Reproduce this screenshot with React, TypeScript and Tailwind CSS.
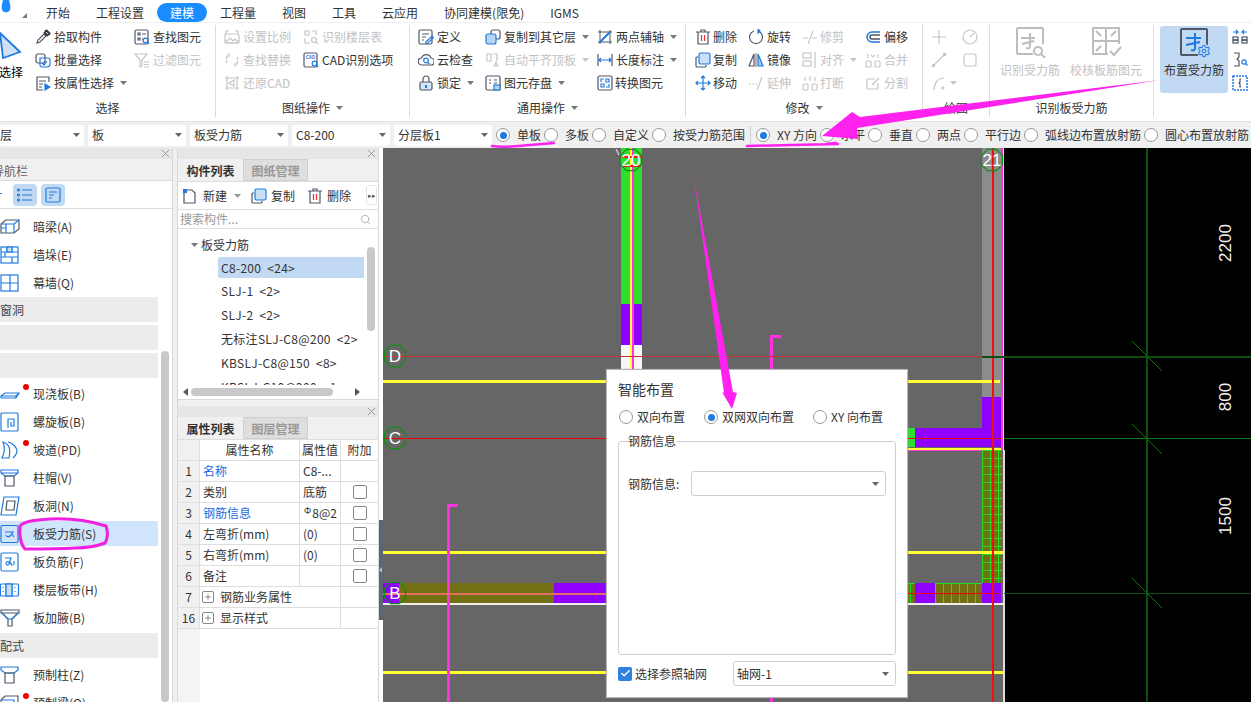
import type { ReactNode } from 'react';
import { Settings, Search, Plus, Check } from 'lucide-react';

const D = '#4f5666';
const B = '#1f7ae0';
const G = '#c6c6c6';

function Ic({ children, s = 16, c = D, vb = '0 0 16 16' }: { children: ReactNode; s?: number; c?: string; vb?: string }) {
  return (
    <svg width={s} height={s} viewBox={vb} fill="none" stroke={c} strokeWidth={1.2} className="shrink-0">
      {children}
    </svg>
  );
}

function Caret({ c = '#777' }: { c?: string }) {
  return (
    <svg width="7" height="4" viewBox="0 0 7 4" className="shrink-0">
      <path d="M0 0h7L3.5 4z" fill={c} />
    </svg>
  );
}

function Item({ icon, label, off, caret, gap }: { icon: ReactNode; label: string; off?: boolean; caret?: boolean; gap?: boolean }) {
  return (
    <div className={`flex items-center h-[23px] whitespace-nowrap ${off ? 'text-[#c2c2c2]' : 'text-[#333]'}`}>
      {icon}
      <span className={gap ? 'ml-[2px]' : 'ml-[3px]'}>{label}</span>
      {caret && <span className="ml-[6px]"><Caret c={off ? G : '#777'} /></span>}
    </div>
  );
}

function Group({ w, label, caret, children, last }: { w: string; label?: string; caret?: boolean; children: ReactNode; last?: boolean }) {
  return (
    <div className={`${w} mt-[2px] shrink-0 flex flex-col ${last ? '' : 'border-r border-[#dcdcdc]'}`}>
      <div className="flex flex-1 overflow-hidden">{children}</div>
      <div className="h-[18px] flex items-center justify-center gap-[6px] text-[#333] leading-none">
        {label}
        {caret && <Caret />}
      </div>
    </div>
  );
}

const ic = {
  pick: <Ic><path d="M2 14l1-3 6-6 2 2-6 6z" /><path d="M9 3l4 4M10 2.5l1.5-1 3 3-1 1.5" strokeWidth={2} stroke="#333" /></Ic>,
  batch: <Ic><rect x="1" y="2" width="9" height="9" rx="2" /><path d="M5 6h8a2 2 0 0 1 2 2v4a3 3 0 0 1-3 3H7a2 2 0 0 1-2-2z" stroke={B} /><path d="M7 11l2 2 3-4" stroke={B} /></Ic>,
  attr: <Ic><path d="M14 7V2H2v13h6" /><path d="M4 6h7M4 9h4M4 12h3" /><path d="M10 9l5 3-5 3z" fill={B} stroke={B} /></Ic>,
  find: <Ic><rect x="1" y="1" width="13" height="14" rx="1.5" /><path d="M4 4h2v2H4zM8 5h4M4 9h2v2H4zM8 10h1" /><circle cx="11.5" cy="11.5" r="2.3" stroke={B} /><path d="M13 13l2 2" stroke={B} /></Ic>,
  filter: <Ic c={G}><path d="M1 2h12L8 8v6L6 15V8z" /><path d="M10 10h5M10 12.5h5M10 15h5" /></Ic>,
  scale: <Ic c={G}><path d="M2 5V2h3M11 2h3v3M2 11v3h12v-3" /><rect x="1" y="5" width="14" height="9" rx="1" /><path d="M3 12l3-3 3 3 2-2 2 2" /></Ic>,
  floor: <Ic c={G}><path d="M2 2h4v4H2zM9 2h4v4M2 9v5h5" /><circle cx="11" cy="11" r="2.5" /><path d="M13 13l2 2" /></Ic>,
  swap: <Ic c={G}><path d="M3 11a6 6 0 0 1 2-8M13 5a6 6 0 0 1-2 8" strokeDasharray="3 1" /><path d="M5 1v3H2M11 15v-3h3" /></Ic>,
  cad: <Ic><rect x="1" y="1" width="13" height="14" rx="1.5" /><text x="7.5" y="7" fontSize="4.5" textAnchor="middle" fill={B} stroke="none" fontFamily="Liberation Sans" fontWeight="700">CAD</text><circle cx="11.5" cy="11.5" r="2.3" stroke={B} /><path d="M13 13l2 2" stroke={B} /></Ic>,
  restore: <Ic c={G}><path d="M3 1v14M13 1v14M1 3h14M1 13h14" /><path d="M5 8l5-3v6z" /></Ic>,
  def: <Ic><rect x="1" y="1" width="13" height="14" rx="1.5" /><path d="M4 5h7M4 8h4M4 11h2" /><path d="M8 13l6-6 1.5 1.5-6 6H8z" stroke={B} /></Ic>,
  cloud: <Ic><path d="M4 13a3.5 3.5 0 0 1-.5-7 5 5 0 0 1 9.5 0 3.5 3.5 0 0 1-.5 7z" /><circle cx="8" cy="8.5" r="2.3" stroke={B} /><path d="M10 10.5l1.5 1.5" stroke={B} /></Ic>,
  lock: <Ic><path d="M5 7V4a3 3 0 0 1 6 0v3" /><rect x="2" y="7" width="12" height="8" rx="1.5" fill="#d5e5f9" /><path d="M8 10v3" stroke={B} strokeWidth={2} /></Ic>,
  copyTo: <Ic><rect x="6" y="1" width="9" height="9" rx="2" /><rect x="1" y="5" width="10" height="10" rx="2" fill="#b8d4f4" stroke={B} /></Ic>,
  align: <Ic c={G}><path d="M2 2h4v7H2zM8 2h4v7" /><path d="M9 15l2-5 2 5M10 13.5h2" /></Ic>,
  save: <Ic><rect x="1" y="1" width="14" height="14" rx="1.5" /><path d="M4 5h2M4 8h2M9 5h3M9 8h3" /><rect x="9" y="10" width="6" height="5" fill="#b8d4f4" stroke={B} /></Ic>,
  axis: <Ic><path d="M3 1v14M1 13h14M13 1v14M1 3h14" strokeWidth={1} /><path d="M3 13L13 3" stroke={B} strokeWidth={2} /></Ic>,
  dim: <Ic><path d="M1 2v12M15 2v12" /><path d="M2 8h12M4 6L2 8l2 2M12 6l2 2-2 2" stroke={B} /></Ic>,
  convert: <Ic><rect x="1" y="1" width="14" height="14" rx="1.5" /><path d="M4 7V4h3M9 12h3V9M4 9h3v3H4zM9 4h3v3H9z" stroke={B} /></Ic>,
  del: <Ic><path d="M1 3h14M6 3V1h4v2M3 3v12h10V3" /><path d="M6.5 6v6M9.5 6v6" stroke="#e03030" /></Ic>,
  rotate: <Ic><path d="M10 2a6.5 6.5 0 1 1-4 0" /><path d="M10 0v4l2-2z" fill={B} stroke={B} /></Ic>,
  trim: <Ic c={G}><path d="M1 9h5M10 9h5M11 2l-5 13" /></Ic>,
  offset: <Ic c={B} s={16}><path d="M15 3H7a5 5 0 0 0 0 10h8" strokeWidth={1.5} /><path d="M15 6H7a2 2 0 0 0 0 4h8" stroke={D} strokeWidth={1.5} /></Ic>,
  copy: <Ic><path d="M3 5H2a1 1 0 0 0-1 1v8a1 1 0 0 0 1 1h8a1 1 0 0 0 1-1v-1" /><rect x="4" y="1" width="11" height="11" rx="1.5" fill="#c9def7" stroke={B} /></Ic>,
  mirror: <Ic><path d="M6 2L1 14h5z" /><path d="M10 2l5 12h-5z" fill="#aac9ef" stroke={B} /><path d="M8 1v14" stroke="#888" /></Ic>,
  alignL: <Ic c={G}><rect x="1" y="1" width="8" height="5" /><rect x="1" y="9" width="8" height="5" /><path d="M13 0v16" /></Ic>,
  merge: <Ic c={G}><rect x="1" y="9" width="5" height="6" rx="1" /><rect x="10" y="9" width="5" height="6" rx="1" /><path d="M3 2v4M13 2v4M6 3l2 2 2-2" /></Ic>,
  move: <Ic c={B}><path d="M8 1v14M1 8h14M6 3l2-2 2 2M6 13l2 2 2-2M3 6L1 8l2 2M13 6l2 2-2 2" /></Ic>,
  extend: <Ic c={G}><path d="M1 9h8" strokeDasharray="2 1.5" /><path d="M14 2L9 15" /></Ic>,
  brk: <Ic c={G}><rect x="1" y="9" width="5" height="6" rx="1" /><rect x="10" y="9" width="5" height="6" rx="1" /><path d="M3 2v4M13 2v4M8 1v5" /></Ic>,
  split: <Ic c={G}><path d="M13 8v6H2V4h8" /><path d="M7 10l7-7" /></Ic>,
};

function Blank() {
  return <div className="h-[23px]" />;
}

function BigBtn({ label, w, off, active, icon }: { label: string; w: string; off?: boolean; active?: boolean; icon: ReactNode }) {
  return (
    <div className={`${w} h-[67px] mt-[1px] shrink-0 flex flex-col items-center rounded-[3px] ${active ? 'bg-[#c1d9f2] text-[#333]' : ''} ${off ? 'text-[#c2c2c2]' : ''}`}>
      <div className="h-[32px] flex items-center">{icon}</div>
      <div className="mt-[3px] leading-[18px] whitespace-nowrap">{label}</div>
    </div>
  );
}

function Radio({ on }: { on?: boolean }) {
  return (
    <span className="w-[14px] h-[14px] shrink-0 rounded-full border border-[#9a9a9a] bg-white flex items-center justify-center">
      {on && <span className="w-[7px] h-[7px] rounded-full bg-[#1f7ae0]" />}
    </span>
  );
}

function Opt({ label, on }: { label: string; on?: boolean }) {
  return (
    <div className="flex items-center gap-[7px] whitespace-nowrap">
      <Radio on={on} />
      <span className="text-[#333]">{label}</span>
    </div>
  );
}

function Sel({ w, label, first }: { w: string; label: string; first?: boolean }) {
  return (
    <div className={`${w} h-[21px] shrink-0 bg-white rounded-[3px] flex items-center justify-between ${first ? 'pr-[4px]' : 'px-[4px]'}`}>
      <span className="text-[#333]">{label}</span>
      <Caret c="#666" />
    </div>
  );
}

const nv = (p: ReactNode) => <Ic s={20} c={B} vb="0 0 20 20">{p}</Ic>;

function NavRow({ label, icon, dot, sel }: { label: string; icon: ReactNode; dot?: boolean; sel?: boolean }) {
  return (
    <div className="h-[28px] shrink-0 flex items-center relative">
      {sel && <div className="absolute inset-x-0 top-[1px] bottom-[2px] bg-[#d0e4fb]" />}
      <div className="w-[33px] shrink-0 relative">{icon}</div>
      <span className="text-[#333] whitespace-nowrap relative">{label}</span>
      {dot && <span className="absolute left-[23px] top-[4px] w-[6px] h-[6px] rounded-full bg-[#f00000]" />}
    </div>
  );
}

function Section({ label }: { label?: string }) {
  return <div className="h-[25px] mb-[3px] shrink-0 bg-[#ececec] flex items-center text-[#444] whitespace-nowrap">{label}</div>;
}

function Strip() {
  return (
    <div className="h-[11px] shrink-0 bg-[#e6e6e6] flex items-center justify-end pr-[3px]">
      <svg width="7" height="7" viewBox="0 0 7 7" stroke="#9a9a9a"><path d="M0 0l7 7M7 0L0 7" /></svg>
    </div>
  );
}

function Tabs({ a, b }: { a: string; b: string }) {
  return (
    <div className="h-[23px] shrink-0 flex bg-[#f0f0f0] border-b border-[#ddd]">
      <div className="w-[65px] pt-[1px] flex items-center justify-center font-bold text-[#333]">{a}</div>
      <div className="w-[65px] pt-[1px] flex items-center justify-center bg-[#dedede] border border-[#cfcfcf] text-[#999] font-bold">{b}</div>
    </div>
  );
}

const listRows = ['SLJ-1  <2>', 'SLJ-2  <2>', '无标注SLJ-C8@200  <2>', 'KBSLJ-C8@150  <8>', 'KBSLJ-C10@200  <1'];

const props: { n: string; name: string; val?: ReactNode; blue?: boolean; chk?: boolean; plus?: boolean }[] = [
  { n: '1', name: '名称', val: 'C8-...', blue: true },
  { n: '2', name: '类别', val: '底筋', chk: true },
  { n: '3', name: '钢筋信息', val: <><span className="text-[9px] relative -top-[2px] ml-[1px] mr-[1px]">Φ</span>8@2</>, blue: true, chk: true },
  { n: '4', name: '左弯折(mm)', val: '(0)', chk: true },
  { n: '5', name: '右弯折(mm)', val: '(0)', chk: true },
  { n: '6', name: '备注', chk: true },
  { n: '7', name: '钢筋业务属性', plus: true },
  { n: '16', name: '显示样式', plus: true },
];

function Bubble({ x, y, t }: { x: number; y: number; t: string }) {
  const pts = Array.from({ length: 8 }, (_, i) => {
    const a = Math.PI / 8 + (i * Math.PI) / 4;
    return `${x + 11.5 * Math.cos(a)},${y + 11.5 * Math.sin(a)}`;
  }).join(' ');
  return (
    <g>
      <polygon points={pts} fill="none" stroke="#0f8f0f" strokeWidth="1.2" />
      <text x={x} y={y + 6} textAnchor="middle" fontSize="17" fill="#fff" fontFamily="Liberation Sans">{t}</text>
    </g>
  );
}

const vMesh = [982, 990, 998];
const hMeshY = Array.from({ length: 17 }, (_, i) => 450 + i * 8);
const hMeshX = [935, 943, 951, 959, 967, 975];

function Drawing() {
  return (
    <svg className="absolute inset-0" width="868" height="554" viewBox="383 148 868 554" shapeRendering="crispEdges">
      <rect x="1004" y="148" width="247" height="554" fill="#000" />

      {/* column 20 */}
      <rect x="621" y="148" width="21" height="156" fill="#2de02d" />
      <rect x="621" y="304" width="21" height="41" fill="#8f00ff" />
      <rect x="621" y="345" width="21" height="25" fill="#f7f7f7" />
      <rect x="630" y="148" width="2" height="222" fill="#ffff33" />
      <rect x="632" y="148" width="1.5" height="222" fill="#ff33dd" />

      {/* column 21 */}
      <rect x="982" y="148" width="19" height="249" fill="#8c8c8c" />
      <rect x="982" y="397" width="19" height="50" fill="#8f00ff" />
      <rect x="915" y="428" width="86" height="19" fill="#8f00ff" />
      <rect x="908" y="428" width="7" height="19" fill="#2de02d" />
      <rect x="383" y="380" width="617" height="3" fill="#ffff33" />
      <rect x="908" y="447.5" width="94" height="2" fill="#ffff33" />
      <rect x="908" y="449.5" width="94" height="1.5" fill="#ff33dd" />
      <rect x="1001" y="148" width="1.5" height="302" fill="#ff33dd" />
      <rect x="1002.5" y="148" width="1.5" height="302" fill="#ffff33" />
      <rect x="1003" y="450" width="1.5" height="252" fill="#dddddd" />

      {/* mesh */}
      <rect x="982" y="451" width="20" height="132" fill="#737014" />
      {vMesh.map(x => <rect key={x} x={x} y="451" width="1" height="132" fill="#22dd22" />)}
      {hMeshY.map(y => <rect key={y} x="982" y={y} width="20" height="1" fill="#22dd22" />)}
      <rect x="908" y="583" width="94" height="20" fill="#737014" />
      <rect x="908" y="583" width="74" height="1" fill="#22dd22" />
      {hMeshX.map(x => <rect key={x} x={x} y="583" width="1" height="20" fill="#22dd22" />)}
      <rect x="910" y="583" width="1" height="20" fill="#22dd22" />
      <rect x="915" y="583" width="20" height="20" fill="#8f00ff" />
      <rect x="982" y="583" width="19" height="20" fill="#8f00ff" />

      {/* band B */}
      <rect x="383" y="583" width="223" height="20" fill="#737014" />
      <rect x="383" y="583" width="16" height="20" fill="#8f00ff" />
      <rect x="554" y="583" width="52" height="20" fill="#8f00ff" />
      <rect x="383" y="603" width="621" height="2" fill="#eeeeee" />

      {/* yellow */}
      <rect x="383" y="551" width="621" height="2.5" fill="#ffff33" />
      <rect x="383" y="671" width="621" height="3" fill="#ffff33" />

      {/* pink */}
      <path d="M448.5 702V505.5H458" stroke="#ff33dd" strokeWidth="3" fill="none" />
      <path d="M771 372V336H781" stroke="#ff33dd" strokeWidth="3" fill="none" />
      <rect x="770" y="697" width="3" height="5" fill="#ff33dd" />

      {/* axis */}
      <rect x="383" y="356" width="599" height="1" fill="#c83030" />
      <rect x="383" y="438" width="618" height="1" fill="#f00000" />
      <rect x="383" y="593" width="223" height="1.5" fill="#e07060" />
      <rect x="908" y="593" width="92" height="1" fill="#f00000" />
      <rect x="992" y="148" width="1.5" height="554" fill="#f01010" />
      <rect x="982" y="356" width="269" height="1.5" fill="#0d4d0d" />
      <rect x="1004" y="438" width="247" height="1" fill="#0d7a0d" />
      <rect x="1004" y="593" width="247" height="1" fill="#0d4d0d" />
      <rect x="1146" y="148" width="2" height="554" fill="#0d4d0d" />
      <g shapeRendering="auto" stroke="#0d7a0d">
        <path d="M1132 341l30 30M1132 424l30 30M1132 578l30 30" />
        <path d="M616 149l3 6" stroke="#fff" />
      </g>

      <g shapeRendering="auto">
        <rect x="622" y="156" width="19" height="2" fill="#e02020" />
        <rect x="622" y="165" width="19" height="2" fill="#e02020" />
        <Bubble x={631} y={160} t="20" />
        <Bubble x={992} y={160} t="21" />
        <Bubble x={395} y={356} t="D" />
        <Bubble x={395} y={438} t="C" />
        <Bubble x={395} y={593} t="B" />
        <text transform="translate(1231 243) rotate(-90)" textAnchor="middle" fontSize="17" fill="#f0f0f0" fontFamily="Liberation Sans">2200</text>
        <text transform="translate(1231 397) rotate(-90)" textAnchor="middle" fontSize="17" fill="#f0f0f0" fontFamily="Liberation Sans">800</text>
        <text transform="translate(1231 516) rotate(-90)" textAnchor="middle" fontSize="17" fill="#f0f0f0" fontFamily="Liberation Sans">1500</text>
      </g>
    </svg>
  );
}

function SmartDialog() {
  return (
    <div className="absolute left-[223px] top-[221px] w-[302px] h-[329px] bg-white border border-[#b5b5b5] shadow-[0_0_1px_#999] text-[#333] px-[11px]">
      <div className="text-[14px] leading-[18px] mt-[10px]">智能布置</div>
      <div className="flex items-center mt-[10px] h-[18px] pl-[1px] leading-none">
        <Radio />
        <span className="ml-[4px] w-[67px]">双向布置</span>
        <Radio on />
        <span className="ml-[4px] w-[91px] whitespace-nowrap">双网双向布置</span>
        <Radio />
        <span className="ml-[4px] whitespace-nowrap">XY 向布置</span>
      </div>
      <div className="relative mt-[15px] h-[214px] border border-[#cfcfcf] rounded-[3px]">
        <span className="absolute left-[9px] -top-[9px] bg-white leading-[16px]">钢筋信息</span>
        <div className="flex items-center mt-[29px] pl-[9px]">
          <span className="w-[63px] shrink-0">钢筋信息:</span>
          <div className="w-[195px] h-[25px] border border-[#cfcfcf] rounded-[3px] flex items-center justify-end pr-[6px]">
            <Caret c="#666" />
          </div>
        </div>
      </div>
      <div className="flex items-center mt-[6px]">
        <span className="w-[14px] h-[14px] rounded-[2px] bg-[#2f80e0] flex items-center justify-center">
          <Check size={11} color="#fff" strokeWidth={3} />
        </span>
        <span className="ml-[3px] w-[98px] whitespace-nowrap">选择参照轴网</span>
        <div className="w-[163px] h-[25px] border border-[#cfcfcf] rounded-[3px] flex items-center justify-between pl-[3px] pr-[6px]">
          轴网-1
          <Caret c="#666" />
        </div>
      </div>
    </div>
  );
}

function Annotations() {
  return (
    <svg className="absolute inset-0 pointer-events-none" width="1251" height="702" viewBox="0 0 1251 702" fill="none">
      <path d="M1160 80L860 117 852 112 822 136 858 139 857 128z" fill="#ff22ee" />
      <path d="M694 178L724 393 722 392 732 409 737 393 733 392z" fill="#ff22ee" />
      <path d="M492 146c12 2 25 0 38-1l24-2" stroke="#ff22ee" strokeWidth="2.5" strokeLinecap="round" />
      <path d="M747 146l45-1 46-1M826 144l10-1" stroke="#ff22ee" strokeWidth="2.5" strokeLinecap="round" />
      <path d="M20 526c4-5 16-6 30-7 20-1 40 2 56 7 2 6 2 12-1 17-8 3-18 5-30 5-18 1-36 1-50 1-4-4-6-14-5-23z" stroke="#f020e0" strokeWidth="3" />
    </svg>
  );
}

export default function App() {
  return (
    <div
      className="relative w-[1251px] h-[702px] overflow-hidden bg-white text-[12px] flex flex-col"
      style={{ fontFamily: '"Noto Sans CJK SC", "Noto Sans", sans-serif' }}
    >
      {/* tab row */}
      <div className="h-[23px] shrink-0 relative flex items-center gap-[26px] pl-[46px] pt-[3px] text-[#333] border-b border-[#f0f0f0] whitespace-nowrap">
        <svg className="absolute left-[1px] top-0" width="10" height="15" viewBox="0 0 10 15"><path d="M2 0h6c1 4 2 7 1 10a4.5 4.5 0 0 1-8 0C0 7 1 4 2 0z" fill="#1a8cff" /></svg>
        <svg className="absolute left-[22px] top-[13px]" width="5" height="5" viewBox="0 0 5 5"><path d="M5 0v5H0z" fill="#777" /></svg>
        <span>开始</span>
        <span>工程设置</span>
        <span className="-mx-[13px] h-[19px] px-[13px] rounded-full bg-[#1a8cff] text-white flex items-center">建模</span>
        <span>工程量</span>
        <span>视图</span>
        <span>工具</span>
        <span>云应用</span>
        <span>协同建模(限免)</span>
        <span>IGMS</span>
      </div>

      {/* ribbon */}
      <div className="h-[99px] shrink-0 flex pb-[4px] border-b border-[#e2e2e2]">
        <Group w="w-[216px]" label="选择">
          <div className="w-[36px] shrink-0 -ml-[1px]">
            <svg width="24" height="30" viewBox="0 0 24 30" className="mt-[5px]">
              <path d="M1 3L21 22 4 28z" fill="#cfe0f7" stroke={B} strokeWidth="1.8" />
            </svg>
            <div className="mt-[3px] leading-[18px] whitespace-nowrap">选择</div>
          </div>
          <div className="w-[99px] shrink-0">
            <Item icon={ic.pick} label="拾取构件" />
            <Item icon={ic.batch} label="批量选择" />
            <Item icon={ic.attr} label="按属性选择" caret />
          </div>
          <div>
            <Item icon={ic.find} label="查找图元" />
            <Item icon={ic.filter} label="过滤图元" off />
          </div>
        </Group>
        <Group w="w-[194px]" label="图纸操作" caret>
          <div className="w-[79px] ml-[8px] shrink-0">
            <Item icon={ic.scale} label="设置比例" off />
            <Item icon={ic.swap} label="查找替换" off />
            <Item icon={ic.restore} label="还原CAD" off />
          </div>
          <div>
            <Item icon={ic.floor} label="识别楼层表" off />
            <Item icon={ic.cad} label="CAD识别选项" />
          </div>
        </Group>
        <Group w="w-[276px]" label="通用操作" caret>
          <div className="w-[67px] ml-[8px] shrink-0">
            <Item icon={ic.def} label="定义" />
            <Item icon={ic.cloud} label="云检查" />
            <Item icon={ic.lock} label="锁定" caret />
          </div>
          <div className="w-[112px] shrink-0">
            <Item icon={ic.copyTo} label="复制到其它层" caret />
            <Item icon={ic.align} label="自动平齐顶板" off caret />
            <Item icon={ic.save} label="图元存盘" caret />
          </div>
          <div>
            <Item icon={ic.axis} label="两点辅轴" caret />
            <Item icon={ic.dim} label="长度标注" caret />
            <Item icon={ic.convert} label="转换图元" gap />
          </div>
        </Group>
        <Group w="w-[237px]" label="修改" caret>
          <div className="w-[53px] ml-[9px] shrink-0">
            <Item icon={ic.del} label="删除" gap />
            <Item icon={ic.copy} label="复制" gap />
            <Item icon={ic.move} label="移动" gap />
          </div>
          <div className="w-[54px] shrink-0">
            <Item icon={ic.rotate} label="旋转" />
            <Item icon={ic.mirror} label="镜像" />
            <Item icon={ic.extend} label="延伸" off />
          </div>
          <div className="w-[63px] shrink-0">
            <Item icon={ic.trim} label="修剪" off gap />
            <Item icon={ic.alignL} label="对齐" off gap caret />
            <Item icon={ic.brk} label="打断" off gap />
          </div>
          <div>
            <Item icon={ic.offset} label="偏移" />
            <Item icon={ic.merge} label="合并" off />
            <Item icon={ic.split} label="分割" off />
          </div>
        </Group>
        <Group w="w-[67px]" label="绘图">
          <div className="w-[31px] ml-[8px] shrink-0">
            <div className="h-[23px] flex items-center"><Ic c={G}><path d="M8 1v5M8 10v5M1 8h5M10 8h5" /><circle cx="8" cy="8" r="1" fill={G} /></Ic></div>
            <div className="h-[23px] flex items-center"><Ic c={G}><path d="M2 14L14 2" /><circle cx="2.5" cy="13.5" r="1.2" /><circle cx="13.5" cy="2.5" r="1.2" /></Ic></div>
            <div className="h-[23px] flex items-center gap-[3px]"><Ic c={G}><path d="M3 15C3 8 7 3 13 3" /><circle cx="12" cy="13" r="1" /></Ic><Caret c={G} /></div>
          </div>
          <div>
            <div className="h-[23px] flex items-center"><Ic c={G}><circle cx="8" cy="8" r="7" /><path d="M8 8l4-4" /></Ic></div>
            <div className="h-[23px] flex items-center"><Ic c={G}><rect x="2" y="2" width="12" height="12" rx="2" /></Ic></div>
            <Blank />
          </div>
        </Group>
        <Group w="w-[164px]" label="识别板受力筋">
          <div className="w-[80px] shrink-0">
            <BigBtn w="w-[80px]" label="识别受力筋" off icon={
              <Ic s={32} c="#bdbdbd" vb="0 0 32 32">
                <path d="M29 18V3a1 1 0 0 0-1-1H4a1 1 0 0 0-1 1v24a1 1 0 0 0 1 1h15" strokeWidth={2} />
                <path d="M7 12h14M8 18l12-3M16 7v13c0 2-1 3-4 2" strokeWidth={2} />
                <circle cx="24" cy="25" r="4" strokeWidth={2} /><path d="M27 28l4 4" strokeWidth={2} />
              </Ic>
            } />
          </div>
          <div className="w-[72px] shrink-0">
            <BigBtn w="w-[72px]" label="校核板筋图元" off icon={
              <Ic s={32} c="#bdbdbd" vb="0 0 32 32">
                <path d="M29 18V2H3v26h15M16 2v26M3 15h26" strokeWidth={2} />
                <path d="M6 5l5 5M26 5l-5 5M6 25l5-5" strokeWidth={2} /><path d="M20 25l4 4 7-8" strokeWidth={2} />
              </Ic>
            } />
          </div>
        </Group>
        <Group w="w-[97px]" last>
          <div className="w-[6px] shrink-0" />
          <BigBtn w="w-[68px]" label="布置受力筋" active icon={
            <div className="relative w-[34px] h-[32px]">
              <svg width="30" height="30" viewBox="0 0 30 30" fill="none" className="absolute left-[2px] top-[1px]">
                <path d="M28 18V3a1 1 0 0 0-1-1H3a1 1 0 0 0-1 1v24a1 1 0 0 0 1 1h16" stroke={D} strokeWidth="2" />
                <path d="M7 11h15M7 18l14-3M16 6v15c0 2-1 3-4 2" stroke={B} strokeWidth="2" />
              </svg>
              <div className="absolute right-0 bottom-0 bg-[#c1d9f2] rounded-full">
                <Settings size={14} color={B} strokeWidth={1.8} />
              </div>
            </div>
          } />
          <div className="ml-[4px] shrink-0">
            <div className="h-[23px] flex items-center"><Ic><path d="M1 3h5M4 1l2 2-2 2M15 3h-5M12 1l-2 2 2 2" stroke={B} /><rect x="1" y="8" width="5" height="3" /><rect x="1" y="11" width="5" height="3" /><rect x="10" y="8" width="5" height="3" /><rect x="10" y="11" width="5" height="3" /></Ic></div>
            <div className="h-[23px] flex items-center"><Ic><path d="M2 1h5v4L5 7l2 2v5H2" /><circle cx="12" cy="10" r="2.2" stroke={B} /><path d="M13.5 11.5l2 2" stroke={B} /></Ic></div>
            <div className="h-[23px] flex items-center"><Ic c={B}><rect x="1" y="1" width="14" height="14" strokeDasharray="2 1" strokeWidth={1.5} /><path d="M9 4H8v3l-1 1 1 1v3h1" stroke={D} /></Ic></div>
          </div>
        </Group>
      </div>

      {/* option bar */}
      <div className="h-[26px] shrink-0 bg-[#f0f0f0] flex items-center whitespace-nowrap">
        <div className="flex items-center gap-[4px] shrink-0">
          <Sel w="w-[84px]" label="层" first />
          <Sel w="w-[98px]" label="板" />
          <Sel w="w-[98px]" label="板受力筋" />
          <Sel w="w-[98px]" label="C8-200" />
          <Sel w="w-[98px]" label="分层板1" />
        </div>
        <div className="flex items-center gap-[3px] ml-[4px] shrink-0">
          <Opt label="单板" on />
          <Opt label="多板" />
          <Opt label="自定义" />
          <Opt label="按受力筋范围" />
        </div>
        <div className="w-[1px] h-[18px] bg-[#d0d0d0] mx-[5px] shrink-0" />
        <div className="flex items-center gap-[3px] shrink-0">
          <Opt label="XY 方向" on />
          <Opt label="水平" />
          <Opt label="垂直" />
          <Opt label="两点" />
          <Opt label="平行边" />
          <Opt label="弧线边布置放射筋" />
          <Opt label="圆心布置放射筋" />
        </div>
      </div>

      {/* main */}
      <div className="flex-1 flex min-h-0">
        {/* nav */}
        <div className="w-[173px] shrink-0 flex flex-col border-r border-[#d8d8d8] overflow-hidden">
          <Strip />
          <div className="h-[22px] shrink-0 pt-[2px] bg-[#f0f0f0] border-b border-[#dcdcdc] flex items-center text-[#666] -ml-[8px]">导航栏</div>
          <div className="h-[28px] shrink-0 flex items-center gap-[4px] pl-[13px] border-b border-[#dcdcdc] relative">
            <span className="absolute left-0 top-[12px] w-[2px] h-[1px] bg-[#1f7ae0]" />
            <span className="w-[24px] h-[22px] rounded-[4px] bg-[#c1d9f2] flex items-center justify-center">
              <Ic c={B}><path d="M5 3h10M5 8h10M5 13h10" /><circle cx="1.5" cy="3" r="1" /><circle cx="1.5" cy="8" r="1" /><circle cx="1.5" cy="13" r="1" /></Ic>
            </span>
            <span className="w-[24px] h-[22px] rounded-[4px] bg-[#c1d9f2] flex items-center justify-center">
              <Ic c={B}><rect x="1" y="1" width="14" height="14" rx="1.5" /><path d="M4 5h8M4 8h5M4 11h3" /></Ic>
            </span>
          </div>
          <div className="flex-1 relative flex flex-col w-[158px] pt-[4px] overflow-hidden">
            <NavRow label="暗梁(A)" icon={nv(<><path d="M1 7l5-4h13v9l-5 4H1z" stroke={D} /><path d="M1 7h13v9M14 7l5-4M6 7v9M1 11h5" /></>)} />
            <NavRow label="墙垛(E)" icon={nv(<><rect x="1" y="2" width="17" height="16" /><path d="M1 7h17M1 12h17M7 2v5M12 2v5M5 7v5M12 12v6" /><rect x="7" y="2" width="5" height="5" fill="#c9def7" /></>)} />
            <NavRow label="幕墙(Q)" icon={nv(<><rect x="1" y="2" width="17" height="16" /><path d="M1 10h17M10 2v16M10 10v8" /></>)} />
            <Section label="窗洞" />
            <Section />
            <div className="-mb-[1px]"><Section /></div>
            <NavRow label="现浇板(B)" dot icon={nv(<><path d="M1 12l4-3h14l-3 5H1z" /><path d="M1 12h15v2M16 12l3-3" /></>)} />
            <NavRow label="螺旋板(B)" icon={nv(<><rect x="1" y="1" width="17" height="18" rx="1" /><path d="M8 16V7h6v7h-3v-4" /></>)} />
            <NavRow label="坡道(PD)" dot icon={nv(<><path d="M3 2c6 2 8 6 6 16H2c3-6 3-11 1-16zM8 2c5 1 9 6 9 9 0 3-3 6-4 7" /></>)} />
            <NavRow label="柱帽(V)" icon={nv(<><path d="M1 2h17v3l-4 3H5L1 5zM1 5h17" /><path d="M5 8h9v10H5z" stroke={D} /></>)} />
            <NavRow label="板洞(N)" icon={nv(<><path d="M4 1h15l-3 18H1z" /><path d="M7 5h8l-1 9H6z" stroke={D} /></>)} />
            <NavRow label="板受力筋(S)" sel icon={nv(<><rect x="1" y="1.5" width="17" height="17" rx="1.5" /><path d="M5 8h8l-3 4c-1 1-4 1-4-1M12 10l2 3" /></>)} />
            <NavRow label="板负筋(F)" icon={nv(<><rect x="1" y="1" width="17" height="18" rx="1.5" /><path d="M5 6h6l-2 6c-1 2-3 1-3-1s5-2 6 3M14 9v4" /></>)} />
            <NavRow label="楼层板带(H)" icon={nv(<><rect x="0.5" y="4" width="18" height="12" rx="1" /><path d="M6 4v12M12 4v12" /><rect x="6" y="4" width="6" height="12" fill="#c9def7" /><path d="M3 7v1M3 11v1M15 7v1M15 11v1" /></>)} />
            <NavRow label="板加腋(B)" icon={nv(<><path d="M1 2h18v3H1z" stroke={D} /><path d="M2 5l6 6v7h4v-7l6-6" stroke={D} /><path d="M2 5l6 6h4l6-6" /></>)} />
            <div className="mt-[1px]"><Section label="配式" /></div>
            <NavRow label="预制柱(Z)" icon={nv(<><path d="M1 2h17v3l-4 3H5L1 5z" /><path d="M5 8h9v10H5z" stroke={D} /></>)} />
            <NavRow label="预制梁(Q)" dot icon={nv(<><path d="M1 7l4-4h13v9l-4 4H1z" stroke={D} /><path d="M1 7h13v9" /></>)} />
          </div>
          <div className="absolute left-[161px] top-[351px] w-[8px] h-[351px] rounded-[4px] bg-[#c8c8c8]" />
        </div>

        <div className="w-[4px] shrink-0 bg-[#f0f0f0]" />

        {/* component list + props */}
        <div className="w-[202px] shrink-0 flex flex-col border-x border-[#d8d8d8]">
          <div className="h-[252px] shrink-0 flex flex-col border-b border-[#d8d8d8] relative">
            <Strip />
            <Tabs a="构件列表" b="图纸管理" />
            <div className="h-[28px] shrink-0 flex items-center pt-[1px] border-b border-[#e0e0e0] pl-[4px] text-[#333] relative">
              <Ic><path d="M3 2h7l3 3v10H2V2" /><rect x="1" y="1" width="4" height="4" fill={B} stroke="none" /></Ic>
              <span className="ml-[5px]">新建</span>
              <span className="ml-[7px]"><Caret c="#999" /></span>
              <span className="ml-[10px]">{ic.copy}</span>
              <span className="ml-[4px]">复制</span>
              <span className="ml-[12px]">{ic.del}</span>
              <span className="ml-[4px]">删除</span>
              <span className="absolute right-[1px] top-[3px] w-[11px] h-[20px] rounded-[3px] border border-[#e4e4e4] flex items-center justify-center text-[7px] text-[#555]">▸▸</span>
            </div>
            <div className="h-[19px] shrink-0 flex items-center justify-between border-b border-[#e0e0e0] pl-[2px] pr-[7px] text-[#999]">
              搜索构件...
              <Search size={11} color="#aaa" strokeWidth={1.8} />
            </div>
            <div className="flex-1 relative overflow-hidden">
              <div className="h-[156px] overflow-hidden">
                <div className="flex items-center h-[24px] pl-[13px] mt-[4px] text-[#333]">
                  <Caret />
                  <span className="ml-[3px]">板受力筋</span>
                </div>
                <div className="ml-[40px] mr-[14px] tracking-[0.3px]">
                  <div className="h-[21px] mb-[1px] flex items-center bg-[#c1d9f2] rounded-l-[2px] pl-[3px] text-[#333] whitespace-pre">C8-200  &lt;24&gt;</div>
                  {listRows.map(r => (
                    <div key={r} className="h-[24px] flex items-center pl-[3px] text-[#333] whitespace-pre">{r}</div>
                  ))}
                </div>
              </div>
              <div className="absolute right-[3px] top-[18px] w-[8px] h-[84px] rounded-[4px] bg-[#c8c8c8]" />
              <div className="absolute bottom-[1px] left-0 right-0 h-[12px] flex items-center">
                <span className="ml-[5px] w-0 h-0 border-y-[4px] border-y-transparent border-r-[5px] border-r-[#555]" />
                <span className="ml-[3px] w-[142px] h-[8px] rounded-[4px] bg-[#c8c8c8]" />
                <span className="ml-[22px] w-0 h-0 border-y-[4px] border-y-transparent border-l-[5px] border-l-[#555]" />
              </div>
            </div>
          </div>
          <div className="h-[6px] shrink-0 bg-[#f0f0f0]" />
          <div className="flex-1 flex flex-col min-h-0">
            <Strip />
            <Tabs a="属性列表" b="图层管理" />
            <div className="flex-1 flex flex-col min-h-0 text-[#333]">
              <div className="h-[21px] shrink-0 flex border-b border-[#dedede]">
                <div className="w-[22px] shrink-0 bg-[#f0f0f0] border-r border-[#dedede]" />
                <div className="w-[100px] shrink-0 flex items-center justify-center border-r border-[#dedede]">属性名称</div>
                <div className="w-[41px] shrink-0 flex items-center justify-center border-r border-[#dedede]">属性值</div>
                <div className="flex-1 flex items-center justify-center">附加</div>
              </div>
              {props.map(p => (
                <div key={p.n} className="h-[21px] shrink-0 flex border-b border-[#dedede]">
                  <div className="w-[22px] shrink-0 bg-[#f0f0f0] border-r border-[#dedede] flex items-center justify-center">{p.n}</div>
                  {p.plus ? (
                    <div className="w-[141px] shrink-0 flex items-center pl-[2px] border-r border-[#dedede]">
                      <span className="w-[12px] h-[12px] rounded-[2px] border border-[#888] flex items-center justify-center">
                        <Plus size={8} color="#555" strokeWidth={2} />
                      </span>
                      <span className="ml-[6px] whitespace-nowrap">{p.name}</span>
                    </div>
                  ) : (
                    <>
                      <div className={`w-[100px] shrink-0 flex items-center pl-[3px] border-r border-[#dedede] ${p.blue ? 'text-[#2468e0]' : ''}`}>{p.name}</div>
                      <div className="w-[41px] shrink-0 flex items-center pl-[3px] border-r border-[#dedede] overflow-hidden whitespace-nowrap">{p.val}</div>
                    </>
                  )}
                  <div className="flex-1 flex items-center justify-center">
                    {p.chk && <span className="w-[14px] h-[14px] rounded-[2px] border border-[#888] bg-white" />}
                  </div>
                </div>
              ))}
              <div className="flex-1 flex">
                <div className="w-[22px] bg-[#f4f4f4]" />
              </div>
            </div>
          </div>
        </div>

        {/* drawing */}
        <div className="w-[4px] shrink-0 bg-white relative">
          <div className="absolute left-0 top-[372px] w-[4px] h-[100px] bg-[#5c6670] flex items-center">
            <span className="w-0 h-0 border-y-[3px] border-y-transparent border-r-[3px] border-r-[#bbb]" />
          </div>
        </div>
        <div className="flex-1 relative bg-[#666666] overflow-hidden">
          <Drawing />
          <SmartDialog />
        </div>
      </div>

      <Annotations />
    </div>
  );
}
